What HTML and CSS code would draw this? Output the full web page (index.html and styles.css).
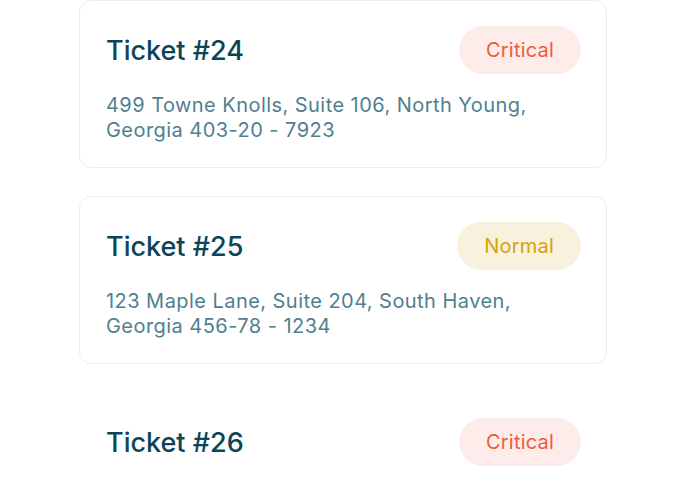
FILE: index.html
```html
<!DOCTYPE html>
<html lang="en">
<head>
    <meta charset="UTF-8">
    <meta name="viewport" content="width=device-width, initial-scale=1.0">
    <title>Tickets</title>
    <link rel="stylesheet" href="styles.css">
</head>
<body>
    <div class="ticket-list">
        <div class="ticket">
            <div class="ticket-head">
                <h3 class="ticket-title">Ticket #24</h3>
                <span class="badge critical">Critical</span>
            </div>
            <p class="ticket-address">499 Towne Knolls, Suite 106, North Young,<br>Georgia 403-20 - 7923</p>
        </div>

        <div class="ticket">
            <div class="ticket-head">
                <h3 class="ticket-title">Ticket #25</h3>
                <span class="badge normal">Normal</span>
            </div>
            <p class="ticket-address">123 Maple Lane, Suite 204, South Haven,<br>Georgia 456-78 - 1234</p>
        </div>

        <div class="ticket fading">
            <div class="ticket-head">
                <h3 class="ticket-title">Ticket #26</h3>
                <span class="badge critical">Critical</span>
            </div>
        </div>
    </div>
</body>
</html>
```

FILE: styles.css
```css
body {
    font-family: Inter, "Open Sans", sans-serif;
    margin: 0;
    background-color: #ffffff;
    color: #0c4558;
}
.ticket-list {
    width: 528px;
    margin: 0 auto;
    display: flex;
    flex-direction: column;
    gap: 28px;
}
.ticket {
    border: 1px solid #ececec;
    border-radius: 12px;
    padding: 25px 25px 24px 26px;
    background-color: white;
}
.ticket.fading {
    border-color: transparent;
}
.ticket-head {
    display: flex;
    justify-content: space-between;
    align-items: center;
    height: 48px;
}
.ticket-title {
    margin: 0;
    font-size: 27px;
    font-weight: 500;
    color: #0c4558;
}
.badge {
    height: 48px;
    line-height: 48px;
    padding: 0 27px;
    border-radius: 24px;
    font-size: 20px;
    letter-spacing: 0.2px;
}
.critical {
    background-color: #fdecea;
    color: #f05a3c;
}
.normal {
    background-color: #f8f1dd;
    color: #d4a40f;
}
.ticket-address {
    margin: 19px 0 0;
    font-size: 20px;
    line-height: 25px;
    letter-spacing: 0.45px;
    color: #50808f;
}
```
